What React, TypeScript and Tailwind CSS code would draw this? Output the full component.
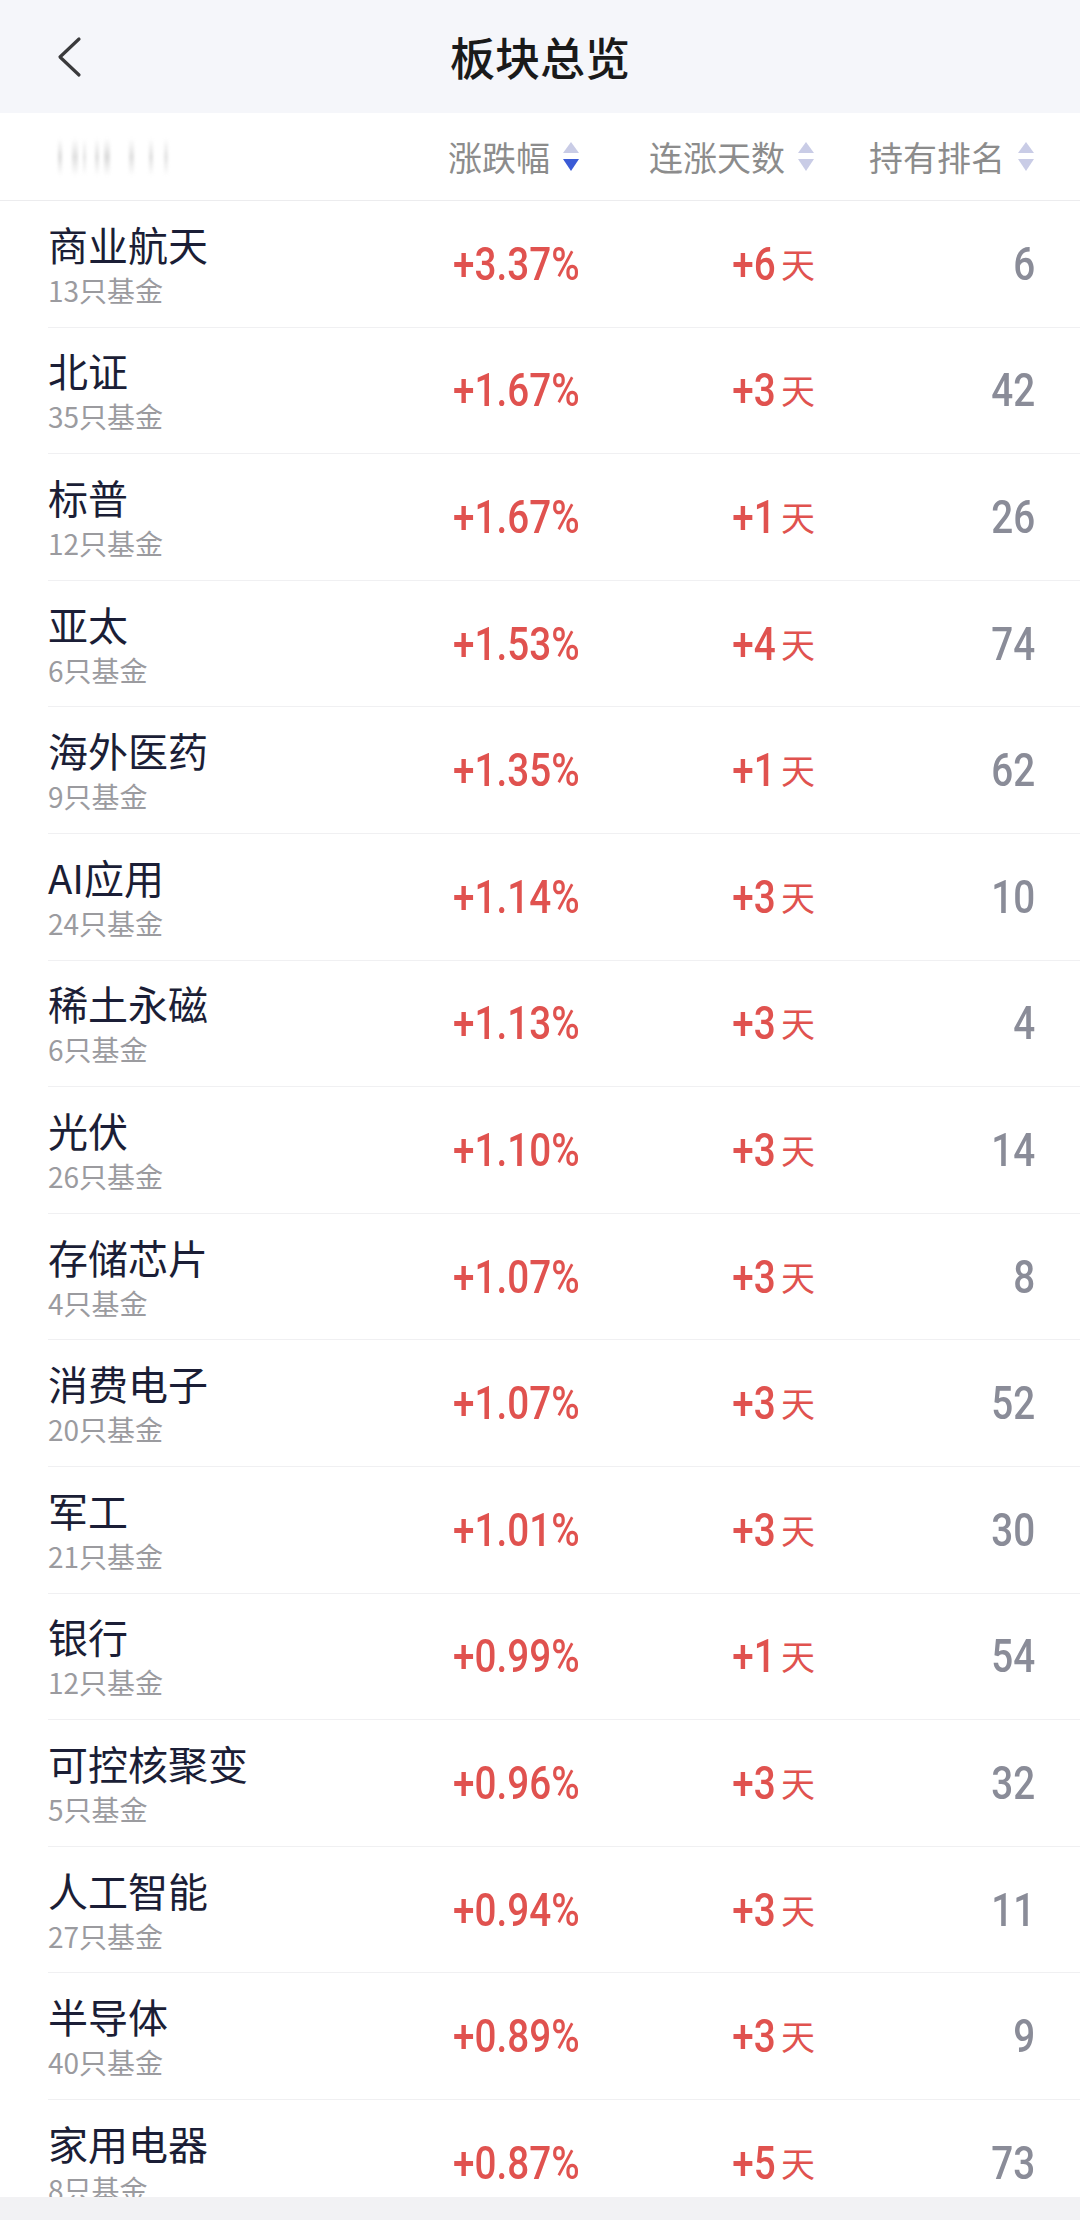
import React from 'react';

interface SectorRow {
    name: string;
    funds: number;
    change: string;
    days: number;
    rank: number;
}

const rows: SectorRow[] = [
    { name: '商业航天', funds: 13, change: '+3.37%', days: 6, rank: 6 },
    { name: '北证', funds: 35, change: '+1.67%', days: 3, rank: 42 },
    { name: '标普', funds: 12, change: '+1.67%', days: 1, rank: 26 },
    { name: '亚太', funds: 6, change: '+1.53%', days: 4, rank: 74 },
    { name: '海外医药', funds: 9, change: '+1.35%', days: 1, rank: 62 },
    { name: 'AI应用', funds: 24, change: '+1.14%', days: 3, rank: 10 },
    { name: '稀土永磁', funds: 6, change: '+1.13%', days: 3, rank: 4 },
    { name: '光伏', funds: 26, change: '+1.10%', days: 3, rank: 14 },
    { name: '存储芯片', funds: 4, change: '+1.07%', days: 3, rank: 8 },
    { name: '消费电子', funds: 20, change: '+1.07%', days: 3, rank: 52 },
    { name: '军工', funds: 21, change: '+1.01%', days: 3, rank: 30 },
    { name: '银行', funds: 12, change: '+0.99%', days: 1, rank: 54 },
    { name: '可控核聚变', funds: 5, change: '+0.96%', days: 3, rank: 32 },
    { name: '人工智能', funds: 27, change: '+0.94%', days: 3, rank: 11 },
    { name: '半导体', funds: 40, change: '+0.89%', days: 3, rank: 9 },
    { name: '家用电器', funds: 8, change: '+0.87%', days: 5, rank: 73 },
];

const cjk = { fontFamily: '"Noto Sans CJK SC", "Noto Sans", sans-serif' };
const num = { fontFamily: 'Roboto, "Noto Sans CJK SC", sans-serif' };

const SortIcon = ({ active }: { active?: boolean }) => (
    <svg width="18" height="32" viewBox="0 0 18 32" className="shrink-0">
        <path d="M9 1 L17 12 L1 12 Z" fill="#c9cce6" />
        <path d="M1 18 L17 18 L9 30 Z" fill={active ? '#3b5bd6' : '#c9cce6'} />
    </svg>
);

const HeaderCell = ({ label, active, className }: { label: string; active?: boolean; className: string }) => (
    <div className={`flex items-center justify-end gap-[12px] ${className}`}>
        <span className="text-[34px] leading-none text-[#8c8c8c]">{label}</span>
        <SortIcon active={active} />
    </div>
);

// blurred placeholder where the name column title sits
const BlurredLabel = () => {
    const bars = [
        { w: 4, o: 0.45, m: 10 },
        { w: 6, o: 0.4, m: 10 },
        { w: 3, o: 0.35, m: 5 },
        { w: 4, o: 0.4, m: 9 },
        { w: 6, o: 0.45, m: 5 },
        { w: 5, o: 0.4, m: 19 },
        { w: 4, o: 0.4, m: 15 },
        { w: 4, o: 0.35, m: 11 },
    ];
    return (
        <div className="flex h-[38px] items-stretch pl-[5px] blur-[1.5px]">
            {bars.map((b, i) => (
                <div
                    key={i}
                    className="bg-gradient-to-b from-transparent via-[#b0b0b0] to-transparent"
                    style={{ width: b.w, opacity: b.o, marginLeft: b.m }}
                />
            ))}
        </div>
    );
};

const Row = ({ row }: { row: SectorRow }) => (
    <div className="h-[126.6px] shrink-0 pl-[48px]">
        <div className="flex h-full items-center border-b border-[#f0f0f2] pr-[45px]">
            <div className="flex min-w-0 flex-1 flex-col" style={cjk}>
                <span className="text-[40px] leading-[48px] text-[#1b1e36]">{row.name}</span>
                <span className="mt-[4px] text-[28px] leading-[36px] text-[#9b9b9f]">{row.funds}只基金</span>
            </div>
            <div className="flex w-[200px] justify-end">
                <span className="origin-right scale-x-[0.84] text-[46px] font-medium leading-none text-[#e0524f]" style={num}>
                    {row.change}
                </span>
            </div>
            <div className="flex w-[235px] items-center justify-end text-[#e0524f]">
                <span className="origin-right scale-x-[0.84] text-[46px] font-medium leading-none" style={num}>
                    +{row.days}
                </span>
                <span className="ml-[5px] text-[34px] leading-none" style={cjk}>
                    天
                </span>
            </div>
            <div className="flex w-[220px] justify-end">
                <span className="origin-right scale-x-[0.84] text-[46px] font-medium leading-none text-[#8a8c98]" style={num}>
                    {row.rank}
                </span>
            </div>
        </div>
    </div>
);

export default function App() {
    return (
        <div className="flex h-[2220px] w-[1080px] flex-col overflow-hidden bg-white" style={cjk}>
            <div className="grid h-[113px] shrink-0 grid-cols-[1fr_auto_1fr] items-center bg-[#f5f6fa]">
                <div className="pl-[56px]">
                    <svg width="26" height="42" viewBox="0 0 26 42">
                        <path d="M23 3 L4 21 L23 39" fill="none" stroke="#3a3a3c" strokeWidth="3.2" strokeLinecap="round" strokeLinejoin="round" />
                    </svg>
                </div>
                <h1 className="text-[45px] font-medium leading-none text-[#1a1a1a]">板块总览</h1>
                <div />
            </div>

            <div className="flex h-[88px] shrink-0 items-center border-b border-[#ececee] pl-[43px] pr-[45px]">
                <div className="flex-1">
                    <BlurredLabel />
                </div>
                <HeaderCell label="涨跌幅" active className="w-[200px]" />
                <HeaderCell label="连涨天数" className="w-[235px]" />
                <HeaderCell label="持有排名" className="w-[220px]" />
            </div>

            <div className="flex min-h-0 flex-1 flex-col overflow-hidden">
                {rows.map((row) => (
                    <Row key={row.name} row={row} />
                ))}
            </div>

            <div className="h-[23px] shrink-0 bg-[#f2f2f4]" />
        </div>
    );
}
